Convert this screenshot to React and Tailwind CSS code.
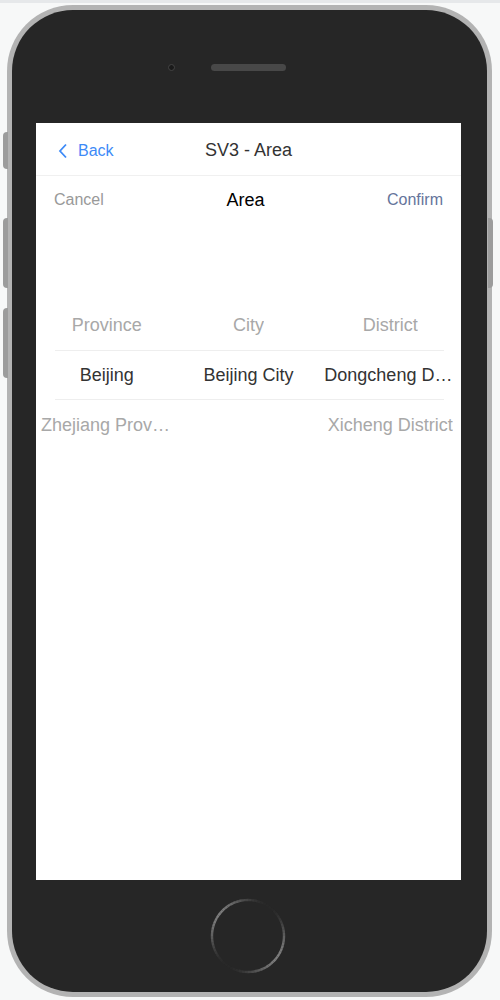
import React from "react";

const columns = [
  ["Province", "Beijing", "Zhejiang Province"],
  ["City", "Beijing City", ""],
  ["District", "Dongcheng District", "Xicheng District"],
];

function HomeButton() {
  const segs = [];
  for (let i = 0; i < 72; i++) {
    const a1 = (i * 5 * Math.PI) / 180;
    const a2 = ((i + 1) * 5 * Math.PI) / 180;
    const mid = i * 5 + 2.5;
    const b = Math.pow(Math.abs(Math.cos(((mid - 35) * Math.PI) / 180)), 2.2);
    const r = 36;
    segs.push(
      <path
        key={i}
        d={`M ${40 + r * Math.cos(a1)} ${40 + r * Math.sin(a1)} A ${r} ${r} 0 0 1 ${40 + r * Math.cos(a2)} ${40 + r * Math.sin(a2)}`}
        fill="none"
        stroke="#8a8a8a"
        strokeOpacity={0.02 + 0.85 * b}
        strokeWidth="2.4"
      />
    );
  }
  return (
    <svg width="80" height="80" viewBox="0 0 80 80">
      {segs}
    </svg>
  );
}

export default function App() {
  return (
    <div
      className="w-[500px] h-[1000px] bg-[#f7f8f8] border-t-[3px] border-[#e6e8ea] relative overflow-hidden"
      style={{ fontFamily: '"Liberation Sans", Arial, sans-serif' }}
    >
      {/* side buttons */}
      <div className="absolute left-[3px] top-[129px] w-[5px] h-[37px] rounded-l bg-[#9c9c9c]" />
      <div className="absolute left-[3px] top-[215px] w-[5px] h-[70px] rounded-l bg-[#9c9c9c]" />
      <div className="absolute left-[3px] top-[305px] w-[5px] h-[70px] rounded-l bg-[#9c9c9c]" />
      <div className="absolute left-[488px] top-[215px] w-[5px] h-[70px] rounded-r bg-[#9c9c9c]" />

      {/* phone */}
      <div className="ml-[7px] mt-[2px] w-[485px] h-[992px] rounded-[66px] bg-[#b3b3b3] p-[5px]">
        <div className="w-full h-full rounded-[61px] bg-[#262626] flex flex-col">
          {/* top */}
          <div className="h-[113px] flex items-center pl-[156px] pt-[2px] gap-[36px]">
            <div className="w-[7px] h-[7px] rounded-full bg-[#1a1a1a] border border-[#444]" />
            <div className="w-[75px] h-[7px] rounded-full bg-[#484848]" />
          </div>

          {/* screen */}
          <div className="ml-[24px] w-[425px] h-[757px] bg-white flex flex-col">
            {/* nav bar */}
            <div className="h-[53px] flex items-center border-b border-[#f0f0f0] relative pt-[3px]">
              <div className="flex items-center pl-[22px] gap-[10px] text-[#3d8af7] text-[16px]">
                <svg width="10" height="16" viewBox="0 0 10 16">
                  <path d="M8 1.5 L2 8 L8 14.5" fill="none" stroke="#3d8af7" strokeWidth="1.8" />
                </svg>
                <span>Back</span>
              </div>
              <div className="absolute inset-0 flex items-center justify-center text-[18px] text-[#333] pt-[2px]">
                SV3 - Area
              </div>
            </div>

            {/* toolbar */}
            <div className="h-[46px] flex items-center justify-between px-[18px] relative pt-[2px]">
              <span className="text-[16px] text-[#999]">Cancel</span>
              <span className="absolute inset-0 flex items-center justify-center text-[18px] text-black pr-[6px] pt-[2px]">Area</span>
              <span className="text-[16px] text-[#65749b]">Confirm</span>
            </div>

            {/* picker */}
            <div className="mt-[78px] relative">
              <div className="absolute left-[19px] right-[17px] top-[50px] h-[50px] border-y border-[#eeeeee]" />
              <div className="grid grid-cols-3">
                {columns.map((col, ci) => (
                  <div key={ci} className="flex flex-col min-w-0">
                    {col.map((item, ri) => (
                      <div
                        key={ri}
                        className={
                          "h-[50px] flex items-center justify-center px-[5px] text-[18px] " +
                          (ri === 1 ? "text-[#333]" : "text-[#a8a8a8]")
                        }
                      >
                        <span className="truncate">{item}</span>
                      </div>
                    ))}
                  </div>
                ))}
              </div>
            </div>
          </div>

          {/* bottom */}
          <div className="flex-1 flex items-center justify-center pr-[3px]">
            <HomeButton />
          </div>
        </div>
      </div>
    </div>
  );
}
